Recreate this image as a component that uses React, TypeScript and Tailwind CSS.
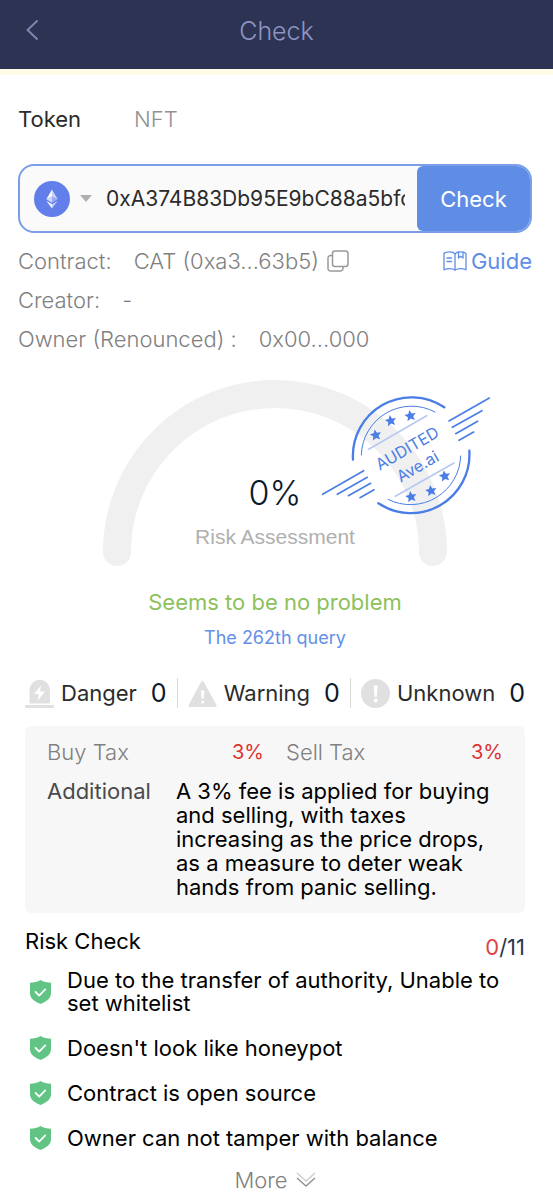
import { useState } from 'react';

type TCounter = {
  label: string;
  count: number;
  icon: React.ReactNode;
};

const DangerIcon = () => (
  <svg className="h-[29px] w-[29px]" viewBox="0 0 29 29" aria-hidden="true">
    <path d="M4.5 24.5V11a10.2 10.2 0 0 1 20.4 0v13.5z" fill="#e0e0e0" />
    <rect x="0" y="26" width="29" height="3" rx="1" fill="#e0e0e0" />
    <path d="M16 6.500 9 15h4.700l-1.200 7 7.500-9.500h-4.900z" fill="#fff" />
  </svg>
);

const WarningIcon = () => (
  <svg className="h-[29px] w-[29px]" viewBox="0 0 29 29" aria-hidden="true">
    <path
      d="M14.5 3.5 27 26.5H2z"
      fill="#e0e0e0"
      stroke="#e0e0e0"
      strokeWidth="3"
      strokeLinejoin="round"
    />
    <path d="M12.8 11.5h3.6l-.7 8.2h-2.2z" fill="#fff" />
    <circle cx="14.6" cy="23" r="1.6" fill="#fff" />
  </svg>
);

const UnknownIcon = () => (
  <svg className="h-[29px] w-[29px]" viewBox="0 0 29 29" aria-hidden="true">
    <circle cx="14.5" cy="14.5" r="14.5" fill="#e0e0e0" />
    <path d="M12.8 6.5h3.8l-.7 11.2h-2.4z" fill="#fff" />
    <circle cx="14.7" cy="21.5" r="1.9" fill="#fff" />
  </svg>
);

const ShieldIcon = () => (
  <svg className="h-6 w-[21px] shrink-0" viewBox="0 0 21 24" aria-hidden="true">
    <path
      d="M10.5 0C13.5 1.8 17 2.6 21 2.7V13c0 5.5-4.5 8.5-10.5 11C4.5 21.5 0 18.5 0 13V2.7C4 2.6 7.5 1.8 10.5 0z"
      fill="#61c485"
    />
    <path
      d="m5.600 12 3.600 3.600 6-6.200"
      fill="none"
      stroke="#fff"
      strokeWidth="1.8"
      strokeLinecap="round"
      strokeLinejoin="round"
    />
  </svg>
);

const EthIcon = () => (
  <svg className="h-9 w-9" viewBox="0 0 36 36" aria-hidden="true">
    <circle cx="18" cy="18" r="18" fill="#627eea" />
    <path d="M18 8.5v7.1l-5.7 2.7z" fill="#fff" opacity=".95" />
    <path d="M18 8.5v7.1l5.7 2.7z" fill="#fff" opacity=".65" />
    <path d="m12.3 18.3 5.7-2.7v6.1z" fill="#fff" opacity=".7" />
    <path d="M23.7 18.3 18 15.600v6.100z" fill="#fff" opacity=".35" />
    <path d="m12.3 19.8 5.7 3.5v4.2z" fill="#fff" opacity=".95" />
    <path d="M23.7 19.8 18 23.3v4.2z" fill="#fff" opacity=".6" />
  </svg>
);

const CopyIcon = () => (
  <svg className="h-[22px] w-[22px]" viewBox="0 0 22 22" fill="none" stroke="#999" strokeWidth="1.5" aria-hidden="true">
    <rect x="5.5" y="1" width="15.5" height="15.5" rx="2.5" />
    <path d="M5.5 5.5H3.5A2.5 2.5 0 0 0 1 8v10.5A2.5 2.5 0 0 0 3.5 21H13.5A2.5 2.5 0 0 0 16 18.5V16.5" />
  </svg>
);

const BookIcon = () => (
  <svg
    className="h-5 w-6"
    viewBox="0 0 24 20"
    fill="none"
    stroke="#5f8de6"
    strokeWidth="1.3"
    strokeLinecap="round"
    strokeLinejoin="round"
    aria-hidden="true"
  >
    <path d="M12 3C11 1.500 9 .8 6.500.8S2 1.300 1 2.500v16.300c1.500-.8 3.500-1.200 5.500-1.200s4 .4 5.500 1.400c1.500-1 3.500-1.400 5.500-1.400s4 .4 5.500 1.200V2.500C22 1.300 20 .8 17.500.8S13 1.500 12 3z" />
    <path d="M12 3v16M4 7h4.500M4 10.500h4.500M15.500 1v6l2.200-1.800L20 7V1" />
  </svg>
);

const STAR = 'M0-17 5-6 17-5 8 3.5 11 15 0 9-11 15-8 3.5-17-5-5-6z';

const stars = [
  [197, 195],
  [242, 152],
  [301, 137],
  [303, 380],
  [363, 362],
  [404, 318],
];

const Stamp = () => (
  <svg
    className="absolute top-3.5 left-[217px] h-[122px] w-[172px]"
    viewBox="30 72 516 366"
    fill="none"
    stroke="#4a7ee6"
    strokeLinecap="round"
  >
    <path d="M129 269A176 176 0 0 1 403 112M478 242A176 176 0 0 1 205 400" strokeWidth="7" />
    <path d="M154 255A150 150 0 0 1 375 126M452 258A150 150 0 0 1 234 388" strokeWidth="3" />
    <path d="M176 238 350 137M256 379 432 279" stroke="#b9c8f2" strokeWidth="5" />
    <path
      d="M417 153 538 84M427 172 516 122M437 191 503 154M447 211 491 186M38 373 161 302M82 373 172 322M115 377 182 340M150 383 192 359"
      strokeWidth="5"
    />
    {stars.map(([x, y]) => (
      <path key={`${x}-${y}`} d={STAR} transform={`translate(${x} ${y}) rotate(-10)`} fill="#4a7ee6" stroke="none" />
    ))}
    <g fill="#4a7ee6" stroke="none" textAnchor="middle" fontSize="48">
      <text transform="translate(300 250) rotate(-30)">AUDITED</text>
      <text transform="translate(331 304) rotate(-30)">Ave.ai</text>
    </g>
  </svg>
);

const Gauge = () => (
  <div className="relative mx-auto mt-[22px] h-[187px] w-[344px]">
    <svg className="h-full w-full" viewBox="0 0 344 187" fill="none" aria-hidden="true">
      <path d="M14 172a158 158 0 0 1 316 0" stroke="#f0f0f0" strokeWidth="28" strokeLinecap="round" />
    </svg>
    <div className="absolute inset-x-0 bottom-[18px] text-center">
      <p className="text-[34px] leading-10 font-light text-[#0b1a2a]">0%</p>
      <p className="mt-3 font-['Liberation_Sans',sans-serif] text-[21px] leading-6 text-[#b0b0b0]">Risk Assessment</p>
    </div>
    <Stamp />
  </div>
);

const counters: TCounter[] = [
  { label: 'Danger', count: 0, icon: <DangerIcon /> },
  { label: 'Warning', count: 0, icon: <WarningIcon /> },
  { label: 'Unknown', count: 0, icon: <UnknownIcon /> },
];

const checks = [
  'Due to the transfer of authority, Unable to set whitelist',
  "Doesn't look like honeypot",
  'Contract is open source',
  'Owner can not tamper with balance',
];

export default function App() {
  const [address, setAddress] = useState('0xA374B83Db95E9bC88a5bfc0163b5');
  const [tab, setTab] = useState('Token');

  return (
    <div className="min-h-screen bg-white font-['Inter',sans-serif] text-[22px] leading-6 text-black">
      <header className="relative box-content flex h-[69px] items-center justify-center border-b-[6px] border-[#fffbe6] bg-[#2d3353]">
        <button type="button" aria-label="Back" className="absolute top-[18px] left-[25px]">
          <svg className="h-6 w-4" viewBox="0 0 16 24" fill="none" stroke="#8389b5" strokeWidth="1.8" aria-hidden="true">
            <path d="M12.500 2.500 2.500 12l10 9.500" />
          </svg>
        </button>
        <h1 className="mb-2 text-[25px] font-light text-[#8f95c2]">Check</h1>
      </header>

      <main className="pr-[21px] pl-[18px]">
        <nav className="mt-8 flex gap-[53px]">
          {['Token', 'NFT'].map((name) => (
            <button
              key={name}
              type="button"
              onClick={() => setTab(name)}
              className={tab === name ? 'text-[#2b2b2b]' : 'font-light text-[#919191]'}
            >
              {name}
            </button>
          ))}
        </nav>

        <form
          className="mt-[33px] flex h-[69px] items-center overflow-hidden rounded-2xl border-2 border-[#7a9fe8] bg-[#fafafa]"
          onSubmit={(e) => e.preventDefault()}
        >
          <label className="relative ml-3.5 flex shrink-0 items-center gap-2.5">
            <EthIcon />
            <svg className="h-[7px] w-3" viewBox="0 0 12 7" aria-hidden="true">
              <path d="M0 0h12L6 7z" fill="#b0b0b0" />
            </svg>
            <select aria-label="Network" className="absolute inset-0 opacity-0">
              <option>Ethereum</option>
            </select>
          </label>
          <input
            aria-label="Contract address"
            value={address}
            onChange={(e) => setAddress(e.target.value)}
            className="mr-3 ml-3.5 min-w-0 flex-1 bg-transparent text-[21px] text-[#2b2b2b] outline-none"
          />
          <button type="submit" className="h-full w-[113px] shrink-0 rounded-l-md bg-[#5f8de6] text-white">
            Check
          </button>
        </form>

        <section className="mt-2 font-light text-[#808080]">
          <div className="flex h-[39px] items-center">
            <span>Contract:</span>
            <span className="ml-[22px]">CAT (0xa3...63b5)</span>
            <button type="button" aria-label="Copy" className="ml-2">
              <CopyIcon />
            </button>
            <a href="#guide" className="ml-auto flex items-center gap-1 font-normal text-[#5f8de6]">
              <BookIcon />
              Guide
            </a>
          </div>
          <div className="flex h-[39px] items-center">
            <span>Creator:</span>
            <span className="ml-[22px]">-</span>
          </div>
          <div className="flex h-[39px] items-center">
            <span>Owner (Renounced) :</span>
            <span className="ml-[22px]">0x00...000</span>
          </div>
        </section>

        <Gauge />

        <p className="mt-[23px] text-center text-[#8cc15c]">Seems to be no problem</p>
        <p className="mt-3 text-center text-[18px] text-[#6590e8]">The 262th query</p>

        <div className="mx-[7px] mt-[28px] flex items-center justify-between">
          {counters.map(({ label, count, icon }, i) => (
            <div key={label} className="contents">
              {i > 0 && <span className="h-[30px] w-px bg-[#d9d9d9]" />}
              <div className="flex items-center">
                {icon}
                <span className="ml-[7px] text-[#2b2b2b]">{label}</span>
                <span className="ml-[14px] text-[25px] text-[#0b1a2a]">{count}</span>
              </div>
            </div>
          ))}
        </div>

        <section className="mx-[7px] mt-[18px] rounded-md bg-[#f7f7f7] px-[22px] py-3.5">
          <div className="grid grid-cols-2 gap-[22px] font-light text-[#808080]">
            <p className="flex justify-between">
              Buy Tax <span className="text-[20px] font-normal text-[#dd3333]">3%</span>
            </p>
            <p className="flex justify-between">
              Sell Tax <span className="text-[20px] font-normal text-[#dd3333]">3%</span>
            </p>
          </div>
          <div className="mt-[15px] flex">
            <span className="w-[129px] shrink-0 text-[#4a4a4a]">Additional</span>
            <p>
              A 3% fee is applied for buying and selling, with taxes increasing as the price drops, as a measure to deter
              weak hands from panic selling.
            </p>
          </div>
        </section>

        <section className="mx-[7px]">
          <div className="mt-4 flex items-start justify-between">
            <h2>Risk Check</h2>
            <p className="mt-1.5 text-[#2d3748]">
              <span className="text-[#dd4444]">0</span>/11
            </p>
          </div>
          <ul className="mt-2.5 flex flex-col gap-[21px] leading-[23px]">
            {checks.map((check) => (
              <li key={check} className="flex items-center gap-4 pl-[5px]">
                <ShieldIcon />
                <span>{check}</span>
              </li>
            ))}
          </ul>
          <button type="button" className="mx-auto mt-[18px] flex items-center gap-2 font-light text-[#808080]">
            More
            <svg className="h-4 w-5" viewBox="0 0 20 16" fill="none" strokeWidth="1.4" aria-hidden="true">
              <path d="m1 1 9 8 9-8" stroke="#ccc" />
              <path d="m1 6 9 8 9-8" stroke="#919191" />
            </svg>
          </button>
        </section>
      </main>
    </div>
  );
}
